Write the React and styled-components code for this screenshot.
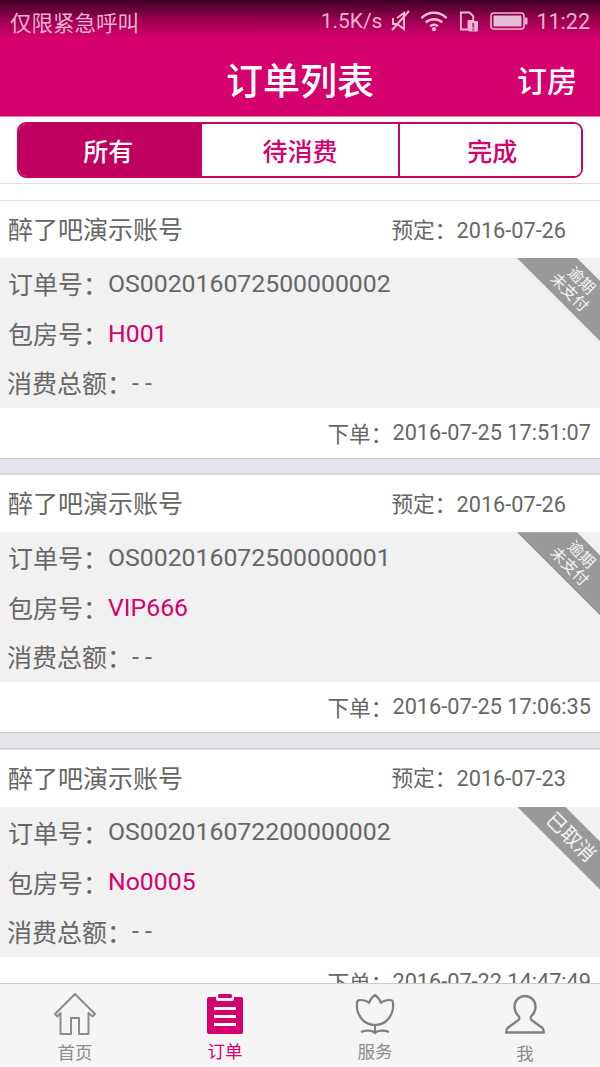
import styled, { createGlobalStyle } from "styled-components"

const orders = [
    { booked: "2016-07-26", no: "OS002016072500000002", room: "H001", placed: "2016-07-25 17:51:07", status: ["逾期", "未支付"] },
    { booked: "2016-07-26", no: "OS002016072500000001", room: "VIP666", placed: "2016-07-25 17:06:35", status: ["逾期", "未支付"] },
    { booked: "2016-07-23", no: "OS002016072200000002", room: "No0005", placed: "2016-07-22 14:47:49", status: ["已取消"] },
]

export default function App() {
    return (
        <>
            <GlobalStyle />
            <Page>
                <Header>
                    <StatusBar>
                        <span>仅限紧急呼叫</span>
                        <StatusRight>
                            <Speed>1.5K/s</Speed>
                            <StatusIcon $left={9} width="20" height="22" viewBox="0 0 20 22" fill="none" stroke="#f0b8d6" strokeWidth="2">
                                <path d="M2 8v6h4l7 5V3L6 8" />
                                <path d="M1 20L18 1" />
                            </StatusIcon>
                            <StatusIcon $left={9} width="28" height="22" viewBox="0 0 29 22" fill="none" stroke="#f0b8d6" strokeWidth="2.600">
                                <path d="M1.500 8c7-7.500 19-7.500 26 0M6 12.500c4.500-4.500 12.500-4.500 17 0M10.500 16.500c2-2 6-2 8 0" />
                                <circle cx="14.500" cy="19.500" r="2.200" fill="#f0b8d6" stroke="none" />
                            </StatusIcon>
                            <StatusIcon $left={11} width="19" height="22" viewBox="0 0 20 22">
                                <path d="M2 2h9l4 4v5h-5v9H2z" fill="none" stroke="#f0b8d6" strokeWidth="2" />
                                <rect x="10" y="11" width="10" height="11" rx="1" fill="#f0b8d6" />
                                <rect x="14" y="13" width="2" height="5" fill="#b0306f" />
                                <rect x="14" y="19" width="2" height="2" fill="#b0306f" />
                            </StatusIcon>
                            <StatusIcon $left={12} width="38" height="18" viewBox="0 0 38 18">
                                <rect x="1" y="1" width="33" height="16" rx="3" fill="none" stroke="#f0b8d6" strokeWidth="1.600" />
                                <rect x="3.500" y="3.500" width="28" height="11" fill="#e8bcd6" />
                                <rect x="35" y="5.500" width="2.500" height="7" rx="1" fill="#f0b8d6" />
                            </StatusIcon>
                            <Clock>11:22</Clock>
                        </StatusRight>
                    </StatusBar>
                    <NavBar>
                        <NavTitle>订单列表</NavTitle>
                        <NavAction>订房</NavAction>
                    </NavBar>
                </Header>

                <TabsBar>
                    <Tabs>
                        <Tab $active $width={182} $right={3}>所有</Tab>
                        <Tab $width={198}>待消费</Tab>
                        <Tab $width={184} $left={4}>完成</Tab>
                    </Tabs>
                </TabsBar>

                <List>
                    {orders.map((order) => (
                        <div key={order.no}>
                            <Card>
                                <TitleRow>
                                    <Shop>醉了吧演示账号</Shop>
                                    <Booked>预定：<Num>{order.booked}</Num></Booked>
                                </TitleRow>
                                <Details>
                                    <Row>订单号：<Value>{order.no}</Value></Row>
                                    <Row>包房号：<Value $accent>{order.room}</Value></Row>
                                    <Row $last>消费总额：<Value>- -</Value></Row>
                                    <Ribbon $small={order.status.length > 1}>
                                        <RibbonText $small={order.status.length > 1}>
                                            {order.status.map((line) => <div key={line}>{line}</div>)}
                                        </RibbonText>
                                    </Ribbon>
                                </Details>
                                <Footer>下单：<Num>{order.placed}</Num></Footer>
                            </Card>
                            <Gap />
                        </div>
                    ))}
                </List>

                <TabBar>
                    <TabItem>
                        <svg width="44" height="44" viewBox="0 0 44 44" fill="none" stroke="#8c8c8c" strokeWidth="2">
                            <path d="M2 22L22 2l20 20-2.500 2.500-4-3.500v21H26V26h-8v16H7.500V21l-3 3.500z" strokeLinejoin="round" />
                        </svg>
                        <TabLabel $gap={7}>首页</TabLabel>
                    </TabItem>
                    <TabItem>
                        <svg width="44" height="44" viewBox="0 0 44 44">
                            <path d="M6 5h7v2a2 2 0 0 0 2 2h14a2 2 0 0 0 2-2V5h7a2 2 0 0 1 2 2v33a2 2 0 0 1-2 2H6a2 2 0 0 1-2-2V7a2 2 0 0 1 2-2z" fill="#d5006d" />
                            <rect x="15" y="2" width="14" height="4" rx="1.500" fill="#d5006d" />
                            <rect x="11" y="15" width="22" height="3" fill="#fff" />
                            <rect x="11" y="23" width="22" height="3" fill="#fff" />
                            <rect x="11" y="31" width="22" height="3" fill="#fff" />
                        </svg>
                        <TabLabel $active $gap={6}>订单</TabLabel>
                    </TabItem>
                    <TabItem>
                        <svg width="44" height="44" viewBox="0 0 44 44" fill="none" stroke="#808080" strokeWidth="2.200">
                            <path d="M4 11c0-2 1-3 3-3 4 0 7 1 9 3 1-3 3-6 6-8 3 2 5 5 6 8 2-2 5-3 9-3 2 0 3 1 3 3 1 10-5 22-18 22S3 21 4 11z" strokeLinejoin="round" />
                            <path d="M22 33v8M8 40c5-2 11-2 14 1 3-3 9-3 14-1" />
                        </svg>
                        <TabLabel $gap={6}>服务</TabLabel>
                    </TabItem>
                    <TabItem>
                        <svg width="44" height="44" viewBox="0 0 44 44" fill="none" stroke="#808080" strokeWidth="2.400">
                            <path d="M22 4c-6 0-10.500 5-10.500 10.500 0 4 2 7.500 4 9.500 1 1 1 3 0 4L4.500 36c-1 1-1.300 2-1.300 4.500h37.600c0-2.500-.3-3.500-1.300-4.500L28.500 28c-1-1-1-3 0-4 2-2 4-5.500 4-9.500C32.500 9 28 4 22 4z" strokeLinejoin="round" />
                        </svg>
                        <TabLabel $gap={8}>我</TabLabel>
                    </TabItem>
                </TabBar>
            </Page>
        </>
    )
}

const GlobalStyle = createGlobalStyle`
    html, body {
        margin: 0;
        padding: 0;
        background: #fff;
    }
    * {
        box-sizing: border-box;
    }
`

const Page = styled.div`
    width: 600px;
    height: 1067px;
    display: flex;
    flex-direction: column;
    overflow: hidden;
    font-family: Roboto, "Noto Sans CJK SC", sans-serif;
    color: #666;
`

const Header = styled.div`
    height: 117px;
    flex-shrink: 0;
    background: linear-gradient(#3c0026 0, #9c0050 20px, #d5006d 38px);
    border-bottom: 1px solid #e878b0;
`

const StatusBar = styled.div`
    height: 42px;
    padding: 0 10px;
    display: flex;
    align-items: center;
    justify-content: space-between;
    font-size: 21.500px;
    color: #ecb0d0;
`

const StatusRight = styled.div`
    display: flex;
    align-items: center;
`

const StatusIcon = styled.svg`
    margin-left: ${(props) => props.$left}px;
`

const Speed = styled.span`
    font-size: 21px;
`

const Clock = styled.span`
    margin-left: 8px;
    font-size: 21.500px;
`

const NavBar = styled.div`
    height: 74px;
    position: relative;
    display: flex;
    align-items: center;
    justify-content: center;
    color: #fff;
`

const NavTitle = styled.div`
    font-size: 37px;
    font-weight: 500;
`

const NavAction = styled.div`
    position: absolute;
    right: 23px;
    font-size: 30px;
    font-weight: 500;
`

const TabsBar = styled.div`
    height: 67px;
    flex-shrink: 0;
    padding: 5px 17px;
    background: #fff;
    border-bottom: 1px solid #ddd;
`

const Tabs = styled.div`
    height: 56px;
    display: flex;
    border: 2px solid #c8005f;
    border-radius: 9px;
    overflow: hidden;
`

const Tab = styled.div`
    width: ${(props) => props.$width}px;
    padding: 0 ${(props) => props.$right || 0}px 0 ${(props) => props.$left || 0}px;
    display: flex;
    align-items: center;
    justify-content: center;
    font-size: 25px;
    font-weight: 500;
    color: ${(props) => (props.$active ? "#fff" : "#d5006d")};
    background: ${(props) => (props.$active ? "#bf005f" : "#fff")};
    & + & {
        border-left: 2px solid #c8005f;
    }
`

const List = styled.div`
    flex: 1;
    min-height: 0;
    overflow: hidden;
    padding-top: 16px;
    background: #fff;
`

const Card = styled.div`
    background: #fff;
    border-top: 1px solid #ddd;
    border-bottom: 1px solid #ccc;
`

const Gap = styled.div`
    height: 15.250px;
    background: #e4e4ea;
    border-bottom: 1px solid #d4d4d8;
`

const TitleRow = styled.div`
    height: 57px;
    padding: 0 34px 3px 8px;
    display: flex;
    align-items: center;
    justify-content: space-between;
`

const Shop = styled.div`
    font-size: 25px;
`

const Booked = styled.div`
    font-size: 21.700px;
`

const Details = styled.div`
    position: relative;
    height: 150px;
    background: #f1f1f1;
    overflow: hidden;
`

const Row = styled.div`
    height: 50px;
    padding: 0 0 ${(props) => (props.$last ? 2 : 0)}px ${(props) => (props.$last ? 7 : 8)}px;
    display: flex;
    align-items: center;
    font-size: 25px;
`

const Value = styled.span`
    font-size: 24.800px;
    white-space: pre;
    color: ${(props) => (props.$accent ? "#d5006d" : "inherit")};
`

const Num = styled.span`
    white-space: pre;
`

const Ribbon = styled.div`
    position: absolute;
    top: 0;
    right: 0;
    width: 83px;
    height: 83px;
    background: #999;
    clip-path: ${(props) => (props.$small
        ? "polygon(0 0, 60px 0, 83px 23px, 83px 83px)"
        : "polygon(0 0, 48px 0, 83px 35px, 83px 83px)")};
`

const RibbonText = styled.div`
    position: absolute;
    top: ${(props) => (props.$small ? 12 : 18.5)}px;
    left: ${(props) => (props.$small ? 23 : 19)}px;
    width: 70px;
    transform: rotate(45deg);
    text-align: center;
    color: #f4f4f4;
    font-size: ${(props) => (props.$small ? 15.5 : 20)}px;
    line-height: ${(props) => (props.$small ? 17 : 24)}px;
    white-space: nowrap;
`

const Footer = styled.div`
    height: 50px;
    padding: 0 9px 1px 0;
    display: flex;
    align-items: center;
    justify-content: flex-end;
    font-size: 21.700px;
`

const TabBar = styled.div`
    height: 84px;
    flex-shrink: 0;
    display: grid;
    grid-template-columns: repeat(4, 150px);
    background: #f5f5f5;
    border-top: 1px solid #ccc;
`

const TabItem = styled.div`
    padding-top: 8px;
    display: flex;
    flex-direction: column;
    align-items: center;
`

const TabLabel = styled.div`
    margin-top: ${(props) => props.$gap}px;
    font-size: 17.500px;
    line-height: 20px;
    color: ${(props) => (props.$active ? "#d5006d" : "#8c8c8c")};
`
